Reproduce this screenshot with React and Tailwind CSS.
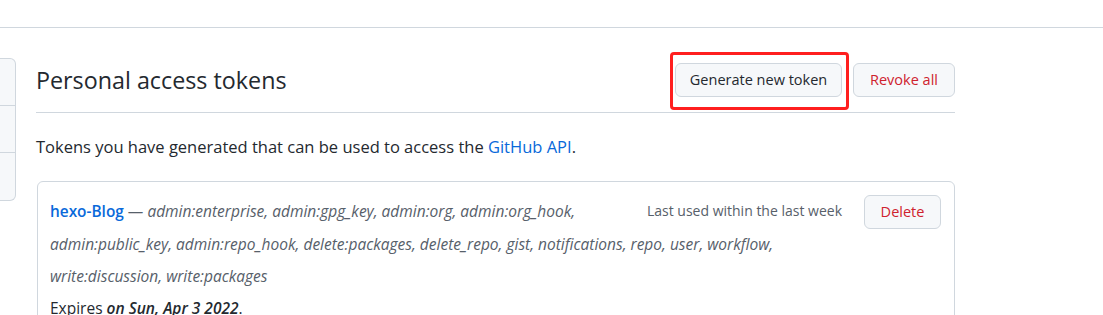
export default function App() {
  return (
    <div className="w-[1103px] h-[315px] overflow-hidden bg-white text-[#24292f] font-['Open_Sans',sans-serif]">
      <div className="h-[28px] border-b border-[#d0d7de]" />
      <div className="flex items-start pt-[30px]">
        <aside className="w-[16px] shrink-0 border border-l-0 border-[#d0d7de] rounded-r-md bg-[#f6f8fa] flex flex-col">
          <div className="h-[47px] border-b border-[#d0d7de]" />
          <div className="h-[47px] border-b border-[#d0d7de]" />
          <div className="h-[47px]" />
        </aside>
        <main className="ml-[20px] w-[919px] shrink-0">
          <div className="flex items-center justify-between pt-[5px] pb-[15px] border-b border-[#d0d7de]">
            <h2 className="text-[23.3px] font-normal leading-[34px]">Personal access tokens</h2>
            <div className="flex items-center">
              <div className="relative">
                <button className="h-[34px] w-[167px] rounded-md border border-[#d0d7de] bg-[#f6f8fa] text-[14.5px] font-medium text-[#24292f]">
                  Generate new token
                </button>
                <div className="pointer-events-none absolute -left-[5px] -top-[11px] -right-[7px] -bottom-[13px] border-[3px] border-[#ff1f1f] rounded-[4px]" />
              </div>
              <button className="ml-[11px] h-[34px] w-[102px] rounded-md border border-[#d0d7de] bg-[#f6f8fa] text-[14.5px] font-medium text-[#cf222e]">
                Revoke all
              </button>
            </div>
          </div>
          <p className="mt-[22px] text-[16.5px] leading-[24px]">
            Tokens you have generated that can be used to access the{" "}
            <a className="text-[#0969da]">GitHub API</a>.
          </p>
          <div className="ml-px mt-[22px] border border-[#d0d7de] rounded-md pt-[13px] pl-[12px] pr-[13px] pb-[16px]">
            <button className="float-right h-[34px] w-[77px] rounded-md border border-[#d0d7de] bg-[#f6f8fa] text-[14.5px] font-medium text-[#cf222e]">
              Delete
            </button>
            <span className="float-right ml-[20px] mr-[22px] text-[14px] leading-[32px] text-[#57606a]">
              Last used within the last week
            </span>
            <div className="text-[15.5px] leading-[32px] text-[#57606a]">
              <strong className="text-[15.4px] font-semibold text-[#0969da]">hexo-Blog</strong>{" "}
              — <em>admin:enterprise, admin:gpg_key, admin:org, admin:org_hook, admin:public_key, admin:repo_hook, delete:packages, delete_repo, gist, notifications, repo, user, workflow, write:discussion, write:packages</em>
            </div>
            <div className="text-[15.5px] leading-[32px]">
              Expires <strong className="font-semibold"><em>on Sun, Apr 3 2022</em></strong>.
            </div>
          </div>
        </main>
      </div>
    </div>
  );
}
